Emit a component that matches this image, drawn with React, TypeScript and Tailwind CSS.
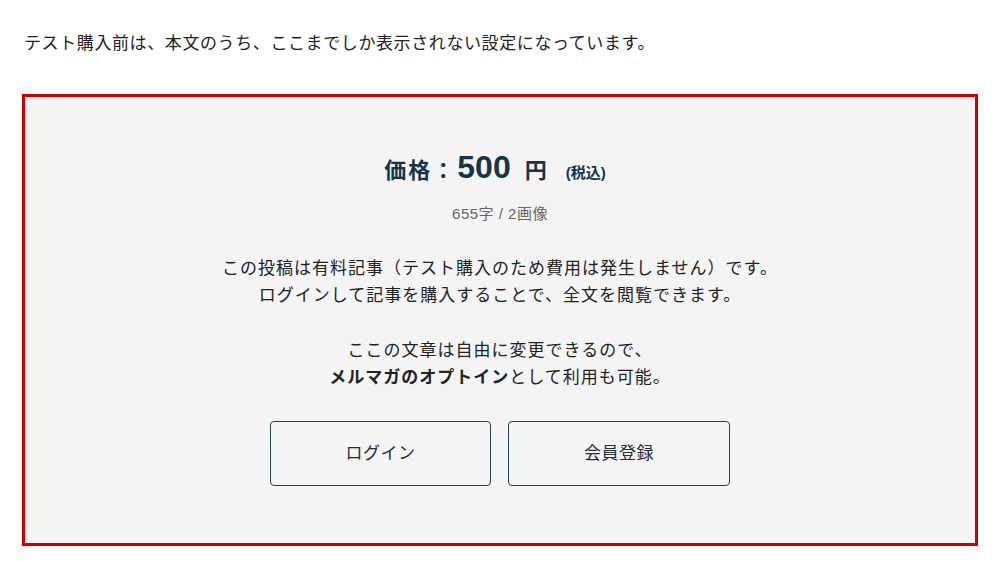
const font = { fontFamily: '"Liberation Sans", "Noto Sans CJK JP", sans-serif' };

export default function App() {
  return (
    <div className="min-h-[562px] bg-white px-[22px] pt-[30px] text-[#222]" style={font}>
      <p className="ml-[2px] text-[17px] leading-[28px] tracking-[0.6px]">
        テスト購入前は、本文のうち、ここまでしか表示されない設定になっています。
      </p>

      <div className="mt-[36px] border-[3px] border-[#cc0000] bg-[#f4f4f4] pt-[50px] pb-[57px] text-center">
        {/* 価格 */}
        <div className="flex items-baseline justify-center pr-[10px] font-bold text-[#163447] leading-[40px]">
          <span className="text-[22px] tracking-[2px]">価格：</span>
          <span className="ml-[1px] text-[32px]">500</span>
          <span className="ml-[14px] text-[22px]">円</span>
          <span className="ml-[19px] text-[15px]">(税込)</span>
        </div>
        <div className="mt-[9px] text-[15px] leading-[24px] tracking-[0.5px] text-[#666]">655字 / 2画像</div>

        <div className="mt-[29px] text-[17px] leading-[27.2px] tracking-[1px]">
          <p>この投稿は有料記事（テスト購入のため費用は発生しません）です。</p>
          <p>ログインして記事を購入することで、全文を閲覧できます。</p>
          <p className="mt-[27.2px]">ここの文章は自由に変更できるので、</p>
          <p>
            <b>メルマガのオプトイン</b>として利用も可能。
          </p>
        </div>

        <div className="mt-[30px] flex justify-center gap-[17px]">
          <button className="flex h-[65px] w-[221px] items-center justify-center rounded-[4px] border-[1.5px] border-[#23404c] text-[17px] tracking-[0.5px] text-[#1e2d36]">
            ログイン
          </button>
          <button className="flex h-[65px] w-[222px] items-center justify-center rounded-[4px] border-[1.5px] border-[#23404c] text-[17px] tracking-[0.5px] text-[#1e2d36]">
            会員登録
          </button>
        </div>
      </div>
    </div>
  );
}
